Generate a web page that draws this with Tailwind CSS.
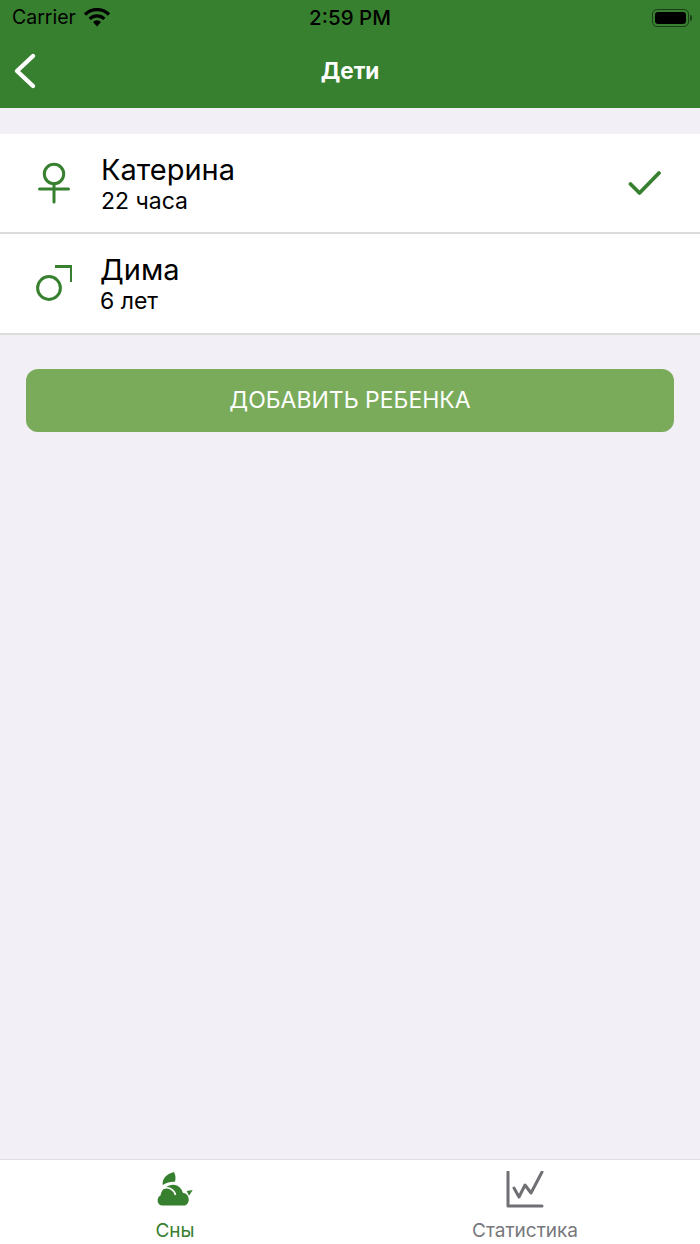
<!DOCTYPE html>
<html lang="ru">
<head>
    <meta charset="UTF-8">
    <meta name="viewport" content="width=device-width, initial-scale=1.0">
    <title>Дети</title>
    <script src="https://cdn.jsdelivr.net/npm/@tailwindcss/browser@4"></script>
</head>
<body class="bg-[#f2eff7] font-['Inter','Noto_Sans',sans-serif]">
    <div class="w-[700px] h-[1244px] flex flex-col overflow-hidden">

        <!-- Шапка -->
        <header class="h-[108px] bg-[#37802f] shrink-0 flex flex-col">
            <div class="h-[36px] relative flex items-center justify-between pl-[12px] pr-[8px] text-black">
                <div class="flex items-center gap-[8px]">
                    <span class="text-[19.5px] leading-none">Carrier</span>
                    <svg width="26" height="19" viewBox="0 0 26 19" class="-mt-[2px]">
                        <path d="M1 6.5 A17 17 0 0 1 25 6.5" fill="none" stroke="#000" stroke-width="3.2"/>
                        <path d="M5.6 10.8 A10.6 10.6 0 0 1 20.4 10.8" fill="none" stroke="#000" stroke-width="3.2"/>
                        <path d="M9 14 A5.6 5.6 0 0 1 17 14 L13 18.5 Z" fill="#000"/>
                    </svg>
                </div>
                <span class="absolute left-0 right-0 text-center text-[20.5px] font-medium leading-none">2:59 PM</span>
                <div class="flex items-center">
                    <div class="w-[37px] h-[18px] rounded-[5px] border border-black/50 p-[2px]">
                        <div class="w-full h-full rounded-[3px] bg-black"></div>
                    </div>
                    <div class="w-[2px] h-[6px] ml-[1px] rounded-r-sm bg-black/50"></div>
                </div>
            </div>
            <div class="flex-1 relative flex items-center justify-center">
                <svg width="24" height="38" viewBox="0 0 24 38" class="absolute left-[13px] top-[16px]">
                    <path d="M20 4 L4 19 L20 34" fill="none" stroke="#fff" stroke-width="4.4" stroke-linecap="round" stroke-linejoin="round"/>
                </svg>
                <h1 class="text-white text-[22.5px] font-bold leading-none -mt-[1px]">Дети</h1>
            </div>
        </header>

        <!-- Список детей -->
        <main class="flex-1 pt-[26px]">
            <div class="bg-white h-[100px] border-b-2 border-[#dcdcdc] flex items-center pl-[36px] pr-[38px]">
                <svg width="36" height="44" viewBox="0 0 36 44" class="shrink-0">
                    <circle cx="18" cy="13" r="9.7" fill="none" stroke="#37802f" stroke-width="3"/>
                    <path d="M3.5 28 H32.5 M18 23 V41" fill="none" stroke="#37802f" stroke-width="3" stroke-linecap="round"/>
                </svg>
                <div class="ml-[29px] flex-1 mt-[2px]">
                    <div class="text-[29px] leading-[34px] text-black">Катерина</div>
                    <div class="text-[23px] leading-[29px] text-black">22 часа</div>
                </div>
                <svg width="34" height="26" viewBox="0 0 34 26" class="shrink-0">
                    <path d="M2.5 14 L11.5 23 L31 3" fill="none" stroke="#37802f" stroke-width="3.8" stroke-linecap="round" stroke-linejoin="round"/>
                </svg>
            </div>
            <div class="bg-white h-[101px] border-b-2 border-[#dcdcdc] flex items-center pl-[36px] pr-[36px]">
                <svg width="36" height="38" viewBox="0 0 36 38" class="shrink-0 mt-[1px]">
                    <circle cx="13" cy="23" r="11.4" fill="none" stroke="#37802f" stroke-width="3"/>
                    <path d="M19 1.5 H35.5 V17" fill="none" stroke="#37802f" stroke-width="3"/>
                </svg>
                <div class="ml-[28px] flex-1 mt-[1px]">
                    <div class="text-[29px] leading-[34px] text-black">Дима</div>
                    <div class="text-[23px] leading-[29px] text-black">6 лет</div>
                </div>
            </div>
            <div class="px-[26px] mt-[34px]">
                <button class="w-full h-[63px] rounded-[12px] bg-[#79ab5b] text-white text-[23px] flex items-center justify-center">ДОБАВИТЬ РЕБЕНКА</button>
            </div>
        </main>

        <!-- Панель вкладок -->
        <nav class="h-[85px] shrink-0 bg-white border-t border-[#dedede] grid grid-cols-2">
            <div class="flex flex-col items-center pt-[12px]">
                <svg width="36" height="34" viewBox="0 0 36 34">
                    <path d="M17 0 C9 2 5 7 5.7 13 C10 10 14 9.5 18 9.7 C19 6 18.5 3 17 0 Z" fill="#37802f"/>
                    <path d="M5 33.5 C0 33.5 -1 25.5 3.5 23.5 C4 20 6 17 8 16 C12 12 20 11 24 17 C25.5 19 25.5 20 26 21 C31 20.5 35 30 28 33.5 Z" fill="#37802f"/>
                    <path d="M6.3 16.5 C11 14.5 17 17 18.5 23" fill="none" stroke="#fff" stroke-width="1.6"/>
                    <path d="M29.7 19 L35.7 18 L32 23.7 Z" fill="#37802f"/>
                </svg>
                <span class="text-[#37802f] text-[19px] leading-none mt-[15px]">Сны</span>
            </div>
            <div class="flex flex-col items-center pt-[11px]">
                <svg width="38" height="37" viewBox="0 0 38 37">
                    <path d="M2 1 V35 H36" fill="none" stroke="#6f6f74" stroke-width="3" stroke-linecap="round" stroke-linejoin="round"/>
                    <path d="M8 17 L13 26 L19 14 L25 22 L36 1" fill="none" stroke="#6f6f74" stroke-width="3" stroke-linecap="round" stroke-linejoin="round"/>
                </svg>
                <span class="text-[#77777c] text-[19px] leading-none mt-[13px]">Статистика</span>
            </div>
        </nav>
    </div>
</body>
</html>
